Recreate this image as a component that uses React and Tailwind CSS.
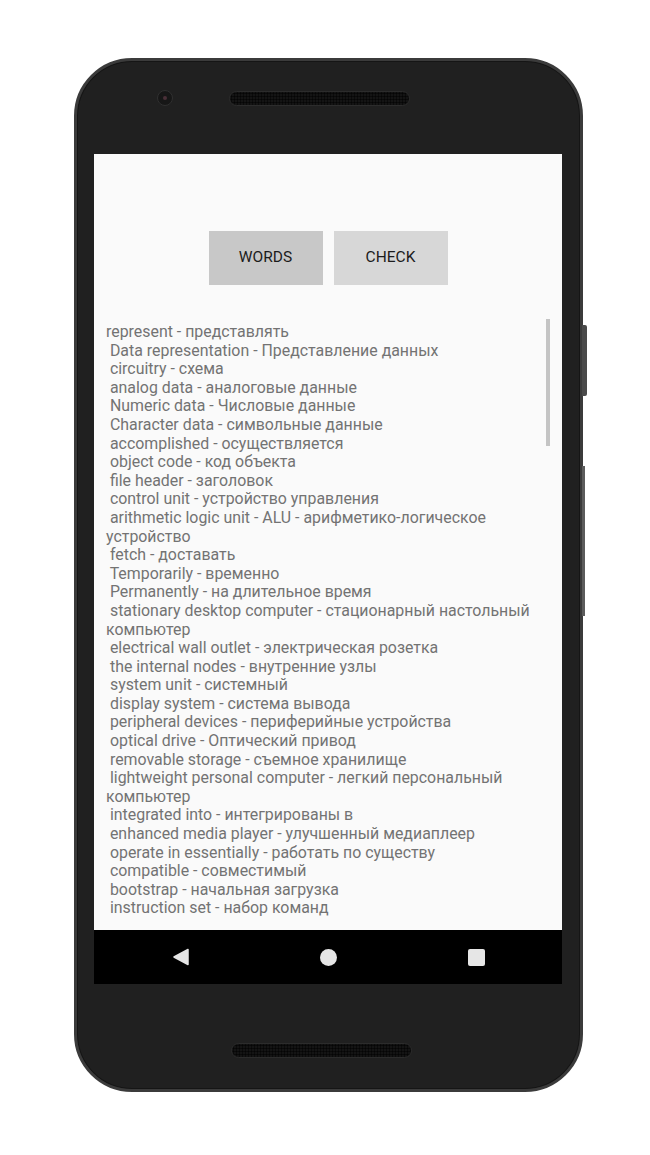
const lines = [
  'represent - представлять',
  ' Data representation - Представление данных',
  ' circuitry - схема',
  ' analog data - аналоговые данные',
  ' Numeric data - Числовые данные',
  ' Character data - символьные данные',
  ' accomplished - осуществляется',
  ' object code - код объекта',
  ' file header - заголовок',
  ' control unit - устройство управления',
  ' arithmetic logic unit - ALU - арифметико-логическое',
  'устройство',
  ' fetch - доставать',
  ' Temporarily - временно',
  ' Permanently - на длительное время',
  ' stationary desktop computer - стационарный настольный',
  'компьютер',
  ' electrical wall outlet - электрическая розетка',
  ' the internal nodes - внутренние узлы',
  ' system unit - системный',
  ' display system - система вывода',
  ' peripheral devices - периферийные устройства',
  ' optical drive - Оптический привод',
  ' removable storage - съемное хранилище',
  ' lightweight personal computer - легкий персональный',
  'компьютер',
  ' integrated into - интегрированы в',
  ' enhanced media player - улучшенный медиаплеер',
  ' operate in essentially - работать по существу',
  ' compatible - совместимый',
  ' bootstrap - начальная загрузка',
  ' instruction set - набор команд',
];

function Speaker() {
  return (
    <div className="w-[181px] h-[15px] rounded-full bg-[#141414] border border-[#2c2c2c] bg-[radial-gradient(circle,#050505_0.9px,transparent_1.2px)] bg-[length:3px_3px]" />
  );
}

function NavBar() {
  return (
    <div className="h-[54px] bg-black flex items-center">
      <div className="flex-1 flex justify-center pl-[12px]">
        <svg width="17" height="18" viewBox="0 0 17 18">
          <path d="M16 1.5 L2 9 L16 16.5 Z" fill="#e6e6e6" stroke="#e6e6e6" strokeWidth="1.5" strokeLinejoin="round" />
        </svg>
      </div>
      <div className="flex-1 flex justify-center">
        <div className="w-[17px] h-[17px] rounded-full bg-[#e6e6e6]" />
      </div>
      <div className="flex-1 flex justify-center pr-[12px]">
        <div className="w-[17px] h-[17px] rounded-[2px] bg-[#e6e6e6]" />
      </div>
    </div>
  );
}

export default function App() {
  return (
    <div className="w-[650px] h-[1155px] bg-white pt-[58px] pl-[74px] font-['Roboto',sans-serif]">
      <div className="relative w-[509px] h-[1034px]">
        {/* side buttons */}
        <div className="absolute right-[-4px] top-[267px] w-[5px] h-[71px] bg-[#4a4a4a] rounded-r-[2px]" />
        <div className="absolute right-[-2px] top-[408px] w-[3px] h-[150px] bg-[#5c5c5c]" />

        <div className="w-full h-full rounded-[58px] border-[3px] border-[#3b3b3b] bg-[#202020] shadow-[inset_0_0_0_1px_#151515] flex flex-col pl-[17px] pr-[18px]">
          {/* top bezel */}
          <div className="h-[93px] pt-[29px] flex items-start">
            <div className="ml-[63px] w-[16px] h-[16px] rounded-full bg-[#171717] border border-[#303030] flex items-center justify-center">
              <div className="w-[4px] h-[4px] rounded-full bg-[#4a3038]" />
            </div>
            <div className="ml-[56px] mt-px">
              <Speaker />
            </div>
          </div>

          {/* screen */}
          <div className="w-[468px] flex flex-col">
            <div className="relative h-[776px] bg-[#fafafa] overflow-hidden">
              <div className="pt-[77px] flex justify-center gap-[11px]">
                <button className="w-[114px] h-[54px] bg-[#c8c8c8] text-[#1c1c1c] text-[15.5px] font-normal">
                  WORDS
                </button>
                <button className="w-[114px] h-[54px] bg-[#d7d7d7] text-[#1c1c1c] text-[15.5px] font-normal">
                  CHECK
                </button>
              </div>
              <div className="pt-[38px] pl-[12px] text-[15.9px] leading-[18.6px] text-[#737373]">
                {lines.map((l, i) => (
                  <div key={i} className="whitespace-pre">{l}</div>
                ))}
              </div>
              <div className="absolute left-[452px] top-[165px] w-[4px] h-[127px] bg-[#c4c4c4]" />
            </div>
            <NavBar />
          </div>

          {/* bottom bezel */}
          <div className="flex-1 flex items-start pt-[59px]">
            <div className="ml-[137px]">
              <Speaker />
            </div>
          </div>
        </div>
      </div>
    </div>
  );
}
